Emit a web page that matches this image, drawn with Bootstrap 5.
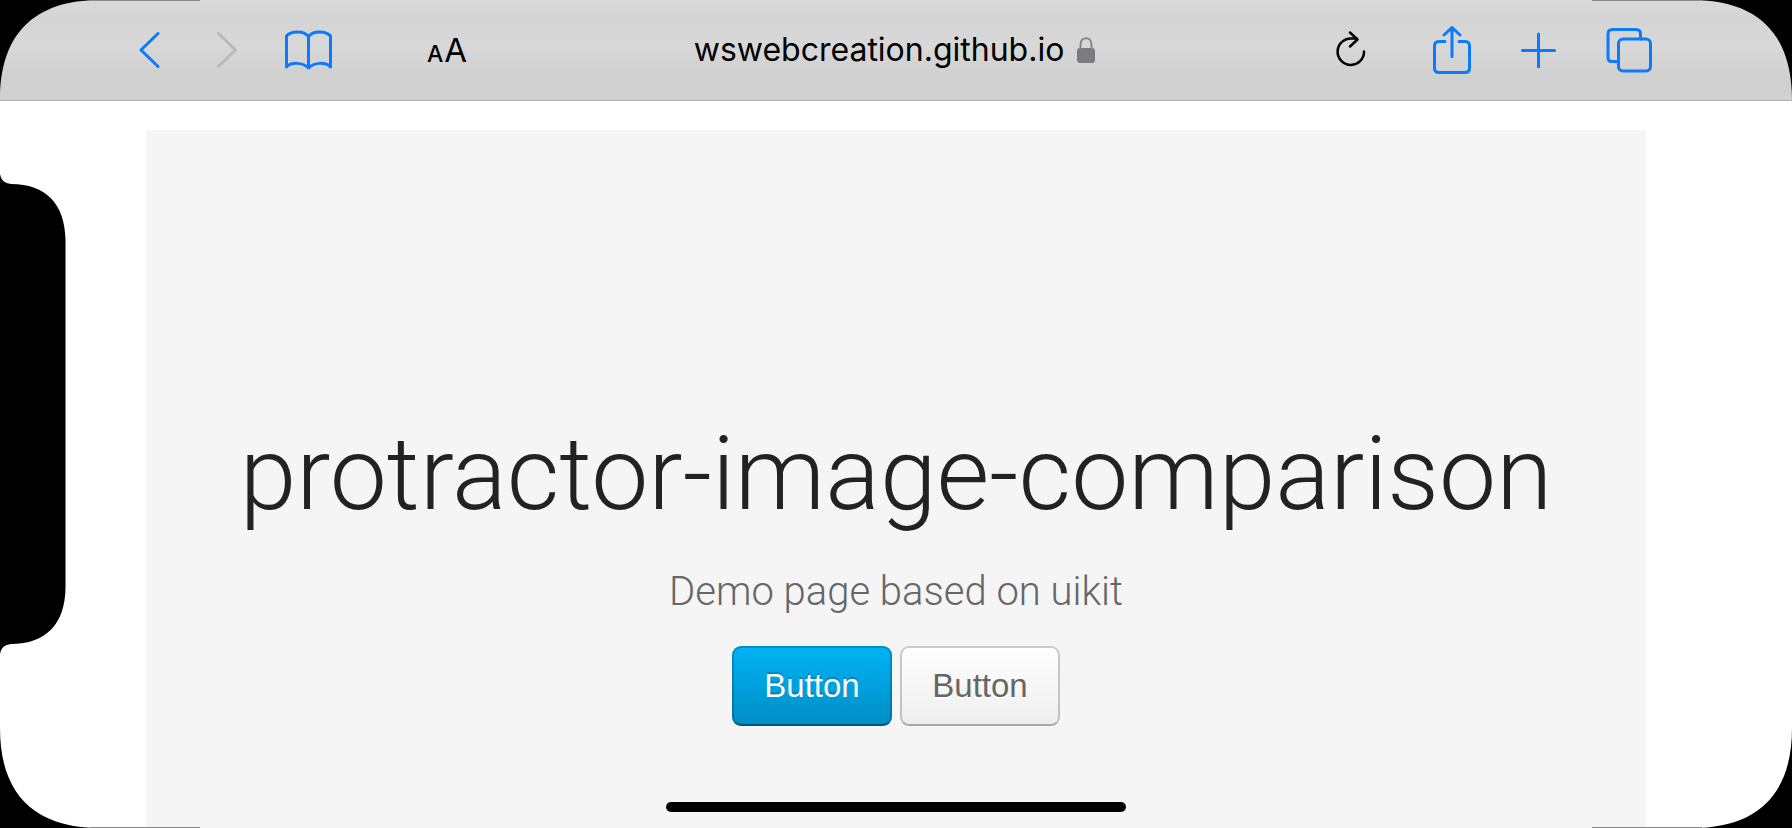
<!DOCTYPE html>
<html lang="en">
<head>
<meta charset="utf-8">
<meta name="viewport" content="width=device-width, initial-scale=1">
<title>protractor-image-comparison</title>
<link href="https://cdn.jsdelivr.net/npm/bootstrap@5.3.0/dist/css/bootstrap.min.css" rel="stylesheet">
<style>
  body { background: #fff; color: #222; font-family: "Liberation Sans", Arial, sans-serif; }
  .device { overflow: hidden; }
  .toolbar {
    height: 101px; padding: 0 140px 0 138px;
    border-bottom: 1px solid #b0b0b0;
    background: linear-gradient(#d9d9d9, #d4d4d4 18%, #d8d8d8 45%, #d0d0d0 75%, #d1d1d1);
    font-family: Inter, sans-serif;
  }
  .tool { border: 0; padding: 0; background: none; color: #0a7aff; line-height: 1; display: flex; }
  .tool:disabled { color: #b9b9bb; }
  .tool svg { fill: none; stroke: currentColor; stroke-width: 3; stroke-linecap: round; stroke-linejoin: round; display: block; }
  .tool-dark { color: #000; }
  .nav-tools { gap: 47px; }
  .page-tools { gap: 50px; }
  .address { margin: 0 67px 0 95px; }
  .address-text { font-size: 32px; line-height: 40px; color: #000; gap: 13px; }
  .reload { width: 44px; justify-content: flex-end; }
  .text-size { align-items: baseline; gap: 1px; font-size: 33px; }
  .text-size small { font-size: 23px; font-weight: 500; }
  .content-area { padding: 29px 146px 0; }
  .hero { background: #f5f5f5; padding-top: 284px; }
  .hero-title { font: 300 102px/120px Roboto, sans-serif; margin: 0 0 28px; color: #222; }
  .hero-lead { font: 300 40px/60px Roboto, sans-serif; margin: 0 0 24px; color: #666; }
  .ui-btn { width: 160px; height: 80px; border-radius: 9px; border: 2px solid rgba(0,0,0,.2); border-bottom-color: rgba(0,0,0,.3); font-size: 33px; padding: 0; background-origin: border-box; }
  .ui-btn-primary { color: #fff; background-image: linear-gradient(#00b4f5, #008dc5); border-bottom-color: rgba(0,0,0,.4); text-shadow: 0 -2px 0 rgba(0,0,0,.2); }
  .ui-btn-default { color: #666; background-image: linear-gradient(#fff, #eee); text-shadow: 0 2px 0 #fff; }
  .edge { pointer-events: none; }
  .edge-right { transform: scaleX(-1); }
  .edge-bottom { transform: scaleY(-1); }
  .edge-right.edge-bottom { transform: scale(-1); }
  .home-bar { width: 460px; height: 10px; bottom: 16px; border-radius: 5px; background: #000; }
</style>
</head>
<body>
<svg class="d-none" aria-hidden="true">
  <symbol id="corner" viewBox="0 0 200 100">
    <path d="M0 0H100C34 0 0 34 0 100Z"/>
    <path d="M90 .5H200" stroke="#888" stroke-width="1"/>
  </symbol>
</svg>
<div class="device position-relative min-vh-100 d-flex flex-column">
  <header class="toolbar d-flex align-items-center">
    <nav class="nav-tools d-flex align-items-center">
      <button class="tool me-2" type="button" aria-label="Back"><svg width="22" height="38"><path d="M20 2.500L3 19L20 35.500"/></svg></button>
      <button class="tool" type="button" aria-label="Forward" disabled><svg width="22" height="38"><path d="M3.500 2.500L20.500 19L3.500 35.500"/></svg></button>
      <button class="tool" type="button" aria-label="Bookmarks"><svg width="48" height="40"><path d="M24.500 6.500C20 .5 7 .5 2.500 6V37C7 32 19 32 24.500 38C30 32 42 32 46.500 37V6C42 .5 29 .5 24.500 6.500V38"/></svg></button>
    </nav>
    <div class="address flex-fill d-flex align-items-center justify-content-between">
      <button class="tool tool-dark text-size" type="button" aria-label="Text size"><small>A</small><span>A</span></button>
      <div class="address-text d-flex align-items-center">
        <span>wswebcreation.github.io</span>
        <svg width="18" height="28" aria-label="Secure"><rect y="12" width="18" height="15" rx="3" fill="#7c7b80"/><path d="M3.500 13V8.500C3.500 0 14.500 0 14.500 8.500V13" fill="none" stroke="#858589" stroke-width="2"/></svg>
      </div>
      <button class="tool tool-dark reload" type="button" aria-label="Reload"><svg width="30" height="38"><path d="M28 20.500A13.200 13.200 0 1 1 14.800 7.500H21M14 1.500L21.500 8.500L14 15.500" stroke-width="2.500"/></svg></button>
    </div>
    <div class="page-tools d-flex align-items-center">
      <button class="tool" type="button" aria-label="Share"><svg width="38" height="50"><path d="M12 16.500H6Q1.500 16.500 1.500 21V43Q1.500 47.500 6 47.500H32Q36.500 47.500 36.500 43V21Q36.500 16.500 32 16.500H26M19 31.500V3M11 10L19 2.500L27 10"/></svg></button>
      <button class="tool" type="button" aria-label="New tab"><svg width="35" height="36"><path d="M1.500 18.500H33.500M17.500 2V35"/></svg></button>
      <button class="tool" type="button" aria-label="Tabs"><svg width="46" height="46"><path d="M11 34.500H6Q2 34.500 2 30.500V7Q2 2.500 6.500 2.500H30Q34.500 2.500 34.500 7V12"/><rect x="12.500" y="12" width="32" height="32" rx="4.500"/></svg></button>
    </div>
  </header>
  <main class="content-area flex-fill d-flex flex-column">
    <section class="hero flex-fill text-center">
      <h1 class="hero-title">protractor-image-comparison</h1>
      <p class="hero-lead">Demo page based on uikit</p>
      <div class="d-flex justify-content-center gap-2">
        <button class="ui-btn ui-btn-primary" type="button">Button</button>
        <button class="ui-btn ui-btn-default" type="button">Button</button>
      </div>
    </section>
  </main>
  <svg class="edge position-absolute top-0 start-0" width="200" height="100"><use href="#corner"/></svg>
  <svg class="edge edge-right position-absolute top-0 end-0" width="200" height="100"><use href="#corner"/></svg>
  <svg class="edge edge-bottom position-absolute bottom-0 start-0" width="200" height="100"><use href="#corner"/></svg>
  <svg class="edge edge-right edge-bottom position-absolute bottom-0 end-0" width="200" height="100"><use href="#corner"/></svg>
  <svg class="edge position-absolute top-50 start-0 translate-middle-y" width="66" height="480"><path d="M0 0Q1 9 11 10C46 10 65 30 65.500 66V414C65 450 46 470 11 470Q1 471 0 480Z"/></svg>
  <div class="home-bar position-absolute start-50 translate-middle-x"></div>
</div>
<script src="https://cdn.jsdelivr.net/npm/bootstrap@5.3.0/dist/js/bootstrap.bundle.min.js"></script>
</body>
</html>
